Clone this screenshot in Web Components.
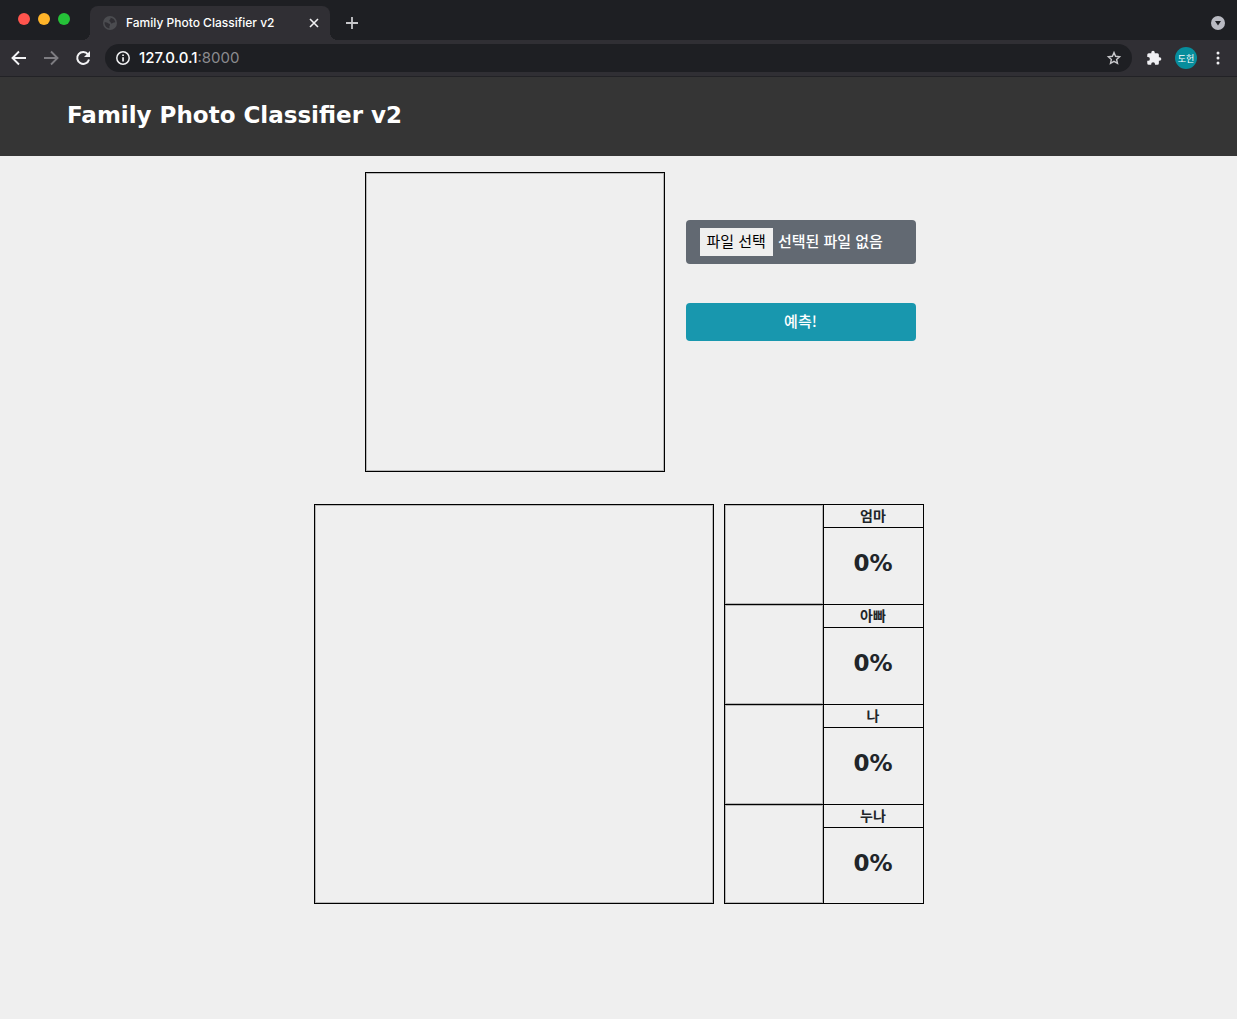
<!DOCTYPE html>
<html lang="ko">
<head>
<meta charset="utf-8">
<meta name="viewport" content="width=device-width, initial-scale=1">
<title>Family Photo Classifier v2</title>
<style>
  html { background: #efefef; }
  body { margin: 0; font-family: "Noto Sans CJK KR", sans-serif; color: #212529; }
</style>
</head>
<body>
<browser-frame address="127.0.0.1" port=":8000">
  <span slot="title">Family Photo Classifier v2</span>
  <span slot="profile">도헌</span>
</browser-frame>
<site-header>Family Photo Classifier v2</site-header>
<photo-classifier></photo-classifier>

<script>
class BaseElement extends HTMLElement {
  constructor() {
    super();
    this.attachShadow({ mode: "open" }).innerHTML =
      "<style>:host{display:block}*{box-sizing:border-box}</style>" + this.render();
  }
}

class BrowserFrame extends BaseElement {
  render() {
    return `
<style>
  :host { font-family: Inter, "Noto Sans CJK KR", sans-serif; color: #fff; background: #1e1f23; }
  button { padding: 0; border: 0; background: none; color: inherit; font: inherit; display: grid; place-items: center; }
  svg { display: block; }
  .strip { display: flex; align-items: flex-end; height: 40px; padding: 0 11px 0 18px; }
  .lights { display: flex; gap: 8px; align-self: center; width: 72px; padding-bottom: 2px; }
  .lights i { width: 12px; height: 12px; border-radius: 50%; background: var(--c); }
  .tab { display: flex; align-items: center; width: 240px; height: 34px; padding: 0 10px 0 12px; gap: 8px;
    border-radius: 8px 8px 0 0; background: #302f34; font-size: 12px; font-weight: 500; position: relative; }
  .tab::before, .tab::after { content: ""; position: absolute; bottom: 0; width: 8px; height: 8px; }
  .tab::before { right: 100%; background: radial-gradient(circle at 0 0, transparent 8px, #302f34 8px); }
  .tab::after { left: 100%; background: radial-gradient(circle at 100% 0, transparent 8px, #302f34 8px); }
  .name { flex: 1; padding-bottom: 2px; white-space: nowrap; }
  .plus { width: 44px; height: 34px; }
  .search { width: 16px; height: 34px; margin-left: auto; }
  .bar { display: flex; align-items: center; height: 37px; padding: 0 9px 0 10px; background: #302f34; border-bottom: 1px solid #222226; }
  .nav { display: flex; gap: 14px; width: 95px; }
  .nav button { width: 18px; height: 28px; }
  .address { flex: 1; display: flex; align-items: center; height: 28px; padding: 0 10px; gap: 8px; border-radius: 14px; background: #1e1f23; }
  .url { flex: 1; font-size: 15px; line-height: 28px; font-weight: 500; }
  .url span { color: #8b8b8f; font-weight: 400; }
  .tools { display: flex; align-items: center; gap: 11px; padding-left: 12px; }
  .tools button { width: 20px; height: 22px; }
  .tools .avatar { width: 22px; border-radius: 50%; background: #078d9c; font-size: 9px; white-space: nowrap; }
</style>
<div class="strip">
  <div class="lights"><i style="--c:#ff544d"></i><i style="--c:#ffb429"></i><i style="--c:#25c138"></i></div>
  <div class="tab">
    <svg width="16" height="16" viewBox="0 0 16 16"><circle cx="8" cy="8" r="7" fill="#4b4c50"/><path d="M2.600 7.200c1.300 0 2.800.1 3.500 1 .6.7 1.700.3 1.900 1.400.2 1-.8 1.400-.6 2.500l.2 1.200C4.600 13 2.300 10.500 2.600 7.200zM8.300 2.700c2.500.1 4.600 1.900 5 4.300-.8 1-2 .3-2.600 1.100-.8.8-1.900.2-2-.7 0-.9-1.500-.7-1.400-1.900.1-1 1.200-.8 1.300-1.700z" fill="#302f34"/></svg>
    <span class="name"><slot name="title"></slot></span>
    <button aria-label="탭 닫기"><svg width="12" height="12" viewBox="0 0 12 12" stroke="#f1f1f3" stroke-width="1.600"><path d="M2 2l8 8M10 2l-8 8"/></svg></button>
  </div>
  <button class="plus" aria-label="새 탭"><svg width="14" height="14" viewBox="0 0 14 14" stroke="#c7c7ca" stroke-width="1.800"><path d="M7 1v12M1 7h12"/></svg></button>
  <button class="search" aria-label="탭 검색"><svg width="16" height="16" viewBox="0 0 16 16"><circle cx="8" cy="8" r="7" fill="#b9bac2"/><path d="M5 6h6l-3 4.500z" fill="#1e1f23"/></svg></button>
</div>
<div class="bar">
  <div class="nav">
    <button aria-label="뒤로"><svg width="18" height="18" viewBox="0 0 18 18" fill="none" stroke="#f3f3f5" stroke-width="1.900"><path d="M16 9H3M9 2.500L2.500 9 9 15.500"/></svg></button>
    <button aria-label="앞으로"><svg width="18" height="18" viewBox="0 0 18 18" fill="none" stroke="#7d7c81" stroke-width="1.900"><path d="M2 9h13M9 2.500L15.500 9 9 15.500"/></svg></button>
    <button aria-label="새로고침"><svg width="18" height="18" viewBox="0 0 18 18"><path d="M14 5.300A6 6 0 1 0 15 10.500" fill="none" stroke="#f3f3f5" stroke-width="2"/><path d="M16 2v6h-6z" fill="#f3f3f5"/></svg></button>
  </div>
  <div class="address">
    <svg width="16" height="16" viewBox="0 0 16 16"><circle cx="8" cy="8" r="6.200" fill="none" stroke="#f0f0f2" stroke-width="1.500"/><path d="M7.200 7.200h1.700V11.500H7.200zM7.200 4.400h1.700v1.600H7.200z" fill="#f0f0f2"/></svg>
    <div class="url">${this.getAttribute("address")}<span>${this.getAttribute("port")}</span></div>
    <button aria-label="북마크"><svg width="16" height="16" viewBox="0 0 16 16"><path d="M8 2.600l1.600 3.700 4 .4-3 2.700.9 4L8 11.300l-3.500 2.100.9-4-3-2.700 4-.4z" fill="none" stroke="#c8c8cb" stroke-width="1.400"/></svg></button>
  </div>
  <div class="tools">
    <button aria-label="확장 프로그램"><svg width="18" height="18" viewBox="0 0 24 24" fill="#f0f0f3"><path d="M19.500 11H18.500V7.500a2 2 0 0 0-2-2H13V4.500a2.300 2.300 0 0 0-4.600 0v1H5a2 2 0 0 0-2 2v3.300h1a2.500 2.500 0 0 1 0 5H3V19a2 2 0 0 0 2 2h3.300v-1a2.500 2.500 0 0 1 5 0v1h3.200a2 2 0 0 0 2-2v-3.400h1a2.300 2.300 0 0 0 0-4.600z"/></svg></button>
    <button class="avatar" aria-label="프로필"><slot name="profile"></slot></button>
    <button aria-label="메뉴"><svg width="20" height="20" viewBox="0 0 20 20" fill="#f0f0f3"><circle cx="10" cy="5" r="1.500"/><circle cx="10" cy="10" r="1.500"/><circle cx="10" cy="15" r="1.500"/></svg></button>
  </div>
</div>`;
  }
}

class SiteHeader extends BaseElement {
  render() {
    return `
<style>
  :host { background: #353535; color: #fff; }
  h1 { margin: 0; padding: 20px 67px 23px; font: bold 23px/36px "DejaVu Sans", sans-serif; }
</style>
<header><h1><slot></slot></h1></header>`;
  }
}

class PhotoCanvas extends BaseElement {
  render() {
    return `
<style>
  :host { border: 1px solid #000; box-shadow: inset 0 0 0 1px #b8b8b8; box-sizing: border-box; }
</style><slot></slot>`;
  }
}

class FilePicker extends BaseElement {
  render() {
    return `
<style>
  label { display: flex; align-items: center; gap: 5px; height: 44px; padding: 0 14px; border-radius: 4px;
    background: #626972; color: #fff; font-size: 15px; line-height: 26px; white-space: nowrap; position: relative; }
  input { position: absolute; inset: 0; width: 100%; height: 100%; opacity: 0; }
  span { padding-bottom: 2px; }
  .choose { padding-inline: 7px; background: #efefef; color: #000; }
  .state { font-weight: 500; }
</style>
<label><input type="file" accept="image/*"><span class="choose">파일 선택</span><span class="state">선택된 파일 없음</span></label>`;
  }
  connectedCallback() {
    const input = this.shadowRoot.querySelector("input");
    input.addEventListener("change", () => {
      this.shadowRoot.querySelector(".state").textContent = input.files.length ? input.files[0].name : "선택된 파일 없음";
    });
  }
}

class PredictButton extends BaseElement {
  render() {
    return `
<style>
  button { display: block; width: 100%; height: 38px; padding: 0 0 2px; border: 0; border-radius: 4px; background: #1897ae; color: #fff;
    font: 500 15px/24px "Noto Sans CJK KR", sans-serif; }
</style>
<button type="button"><slot></slot></button>`;
  }
}

class PersonScore extends BaseElement {
  render() {
    return `
<style>
  :host { display: grid; grid-template-columns: 99px 1fr; height: 100px; border: solid #000; border-width: 1px 1px 0; box-sizing: border-box; }
  :host(:last-of-type) { border-bottom-width: 1px; }
  .face { border-right: 1px solid #000; box-shadow: inset 0 0 0 1px #b8b8b8; }
  .info { display: flex; flex-direction: column; text-align: center; }
  h2 { margin: 0; padding-bottom: 2px; border-bottom: 1px solid #000; font: bold 14px/20px "Noto Sans CJK KR", sans-serif; }
  p { flex: 1; display: grid; place-items: center; margin: 0; padding-bottom: 6px; font: bold 23px/36px "DejaVu Sans", sans-serif; }
</style>
<div class="face"></div>
<div class="info"><h2><slot></slot></h2><p>${this.getAttribute("score")}</p></div>`;
  }
}

class PhotoClassifier extends BaseElement {
  render() {
    return `
<style>
  main { display: flex; flex-direction: column; gap: 32px; max-width: 610px; margin: 0 auto; padding: 16px 0 115px; }
  .upload { display: flex; justify-content: flex-end; gap: 21px; padding-right: 8px; }
  .upload photo-canvas { width: 300px; height: 300px; }
  .controls { display: flex; flex-direction: column; gap: 39px; width: 230px; padding-top: 48px; }
  .result { display: flex; gap: 10px; }
  .result photo-canvas { flex: 1; height: 400px; }
  .scores { width: 200px; }
</style>
<main>
  <section class="upload">
    <photo-canvas></photo-canvas>
    <div class="controls"><file-picker></file-picker><predict-button>예측!</predict-button></div>
  </section>
  <section class="result">
    <photo-canvas></photo-canvas>
    <div class="scores">
      <person-score score="0%">엄마</person-score>
      <person-score score="0%">아빠</person-score>
      <person-score score="0%">나</person-score>
      <person-score score="0%">누나</person-score>
    </div>
  </section>
</main>`;
  }
}

customElements.define("browser-frame", BrowserFrame);
customElements.define("site-header", SiteHeader);
customElements.define("photo-canvas", PhotoCanvas);
customElements.define("file-picker", FilePicker);
customElements.define("predict-button", PredictButton);
customElements.define("person-score", PersonScore);
customElements.define("photo-classifier", PhotoClassifier);
</script>
</body>
</html>
